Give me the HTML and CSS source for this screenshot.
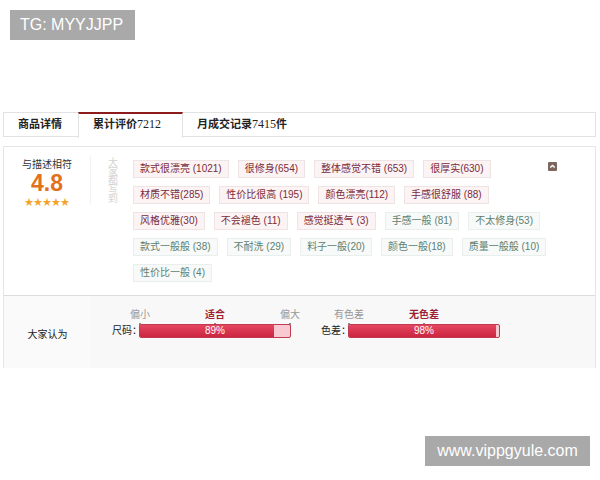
FILE: index.html
```html
<!DOCTYPE html>
<html lang="zh">
<head>
  <meta charset="UTF-8">
  <title>累计评价</title>
  <link rel="stylesheet" href="styles.css">
</head>
<body>
  <div class="mark mark-top">TG: MYYJJPP</div>

  <div class="tabs">
    <div class="tab">商品详情</div>
    <div class="tab active">累计评价<span class="num">7212</span></div>
    <div class="tab">月成交记录<span class="num">7415</span>件</div>
  </div>

  <div class="review">
    <div class="summary">
      <div class="score">
        <div class="score-title">与描述相符</div>
        <div class="score-value">4.8</div>
        <div class="stars">★★★★★</div>
      </div>
      <div class="side-label">大家都写到</div>
      <div class="tags">
        <div class="tag-row">
          <span class="tag">款式很漂亮 (1021)</span>
          <span class="tag">很修身(654)</span>
          <span class="tag">整体感觉不错 (653)</span>
          <span class="tag">很厚实(630)</span>
        </div>
        <div class="tag-row">
          <span class="tag">材质不错(285)</span>
          <span class="tag">性价比很高 (195)</span>
          <span class="tag">颜色漂亮(112)</span>
          <span class="tag">手感很舒服 (88)</span>
        </div>
        <div class="tag-row">
          <span class="tag">风格优雅(30)</span>
          <span class="tag">不会褪色 (11)</span>
          <span class="tag">感觉挺透气 (3)</span>
          <span class="tag neg">手感一般 (81)</span>
          <span class="tag neg">不太修身(53)</span>
        </div>
        <div class="tag-row">
          <span class="tag neg">款式一般般 (38)</span>
          <span class="tag neg">不耐洗 (29)</span>
          <span class="tag neg">料子一般(20)</span>
          <span class="tag neg">颜色一般(18)</span>
          <span class="tag neg">质量一般般 (10)</span>
        </div>
        <div class="tag-row">
          <span class="tag neg">性价比一般 (4)</span>
        </div>
      </div>
      <div class="toggle">
        <svg width="9" height="9" viewBox="0 0 9 9"><path d="M2.3 5.6 L4.5 3.4 L6.7 5.6" fill="none" stroke="#fff" stroke-width="1.4"/></svg>
      </div>
    </div>

    <div class="opinion">
      <div class="opinion-title">大家认为</div>
      <div class="meter">
        <span class="meter-name">尺码：</span>
        <div class="meter-body">
          <div class="meter-labels">
            <span>偏小</span>
            <span class="best">适合</span>
            <span>偏大</span>
          </div>
          <div class="bar">
            <div class="fill" style="width: 89%"></div>
            <span class="bar-text">89%</span>
          </div>
        </div>
      </div>
      <div class="meter">
        <span class="meter-name">色差：</span>
        <div class="meter-body">
          <div class="meter-labels">
            <span>有色差</span>
            <span class="best">无色差</span>
            <span class="blank"></span>
          </div>
          <div class="bar">
            <div class="fill" style="width: 98%"></div>
            <span class="bar-text">98%</span>
          </div>
        </div>
      </div>
    </div>
  </div>

  <div class="mark mark-bottom">www.vippgyule.com</div>
</body>
</html>
```

FILE: styles.css
```css
body {
  margin: 0;
  background: #fff;
  font-family: "Liberation Sans", "Noto Sans CJK SC", sans-serif;
  color: #333;
}

.mark {
  background: #a9a9a9;
  color: #fff;
  font-size: 16px;
  height: 30px;
  line-height: 30px;
}

.mark-top {
  margin: 10px 0 0 10px;
  width: 115px;
  padding-left: 10px;
}

.mark-bottom {
  margin: 68px 10px 0 auto;
  width: 165px;
  text-align: center;
}

/* tab strip */
.tabs {
  display: flex;
  margin: 72px 4px 0 3px;
  height: 23px;
  border: 1px solid #e2e2e2;
  background: #fff;
}

.tab {
  font-size: 11px;
  font-weight: bold;
  color: #222;
  line-height: 23px;
  padding: 0 16px 0 14px;
}

.tab:first-child {
  width: 44px;
}

.tab.active {
  border-top: 2px solid #8e1b1b;
  margin-top: -1px;
  border-left: 1px solid #e2e2e2;
  border-right: 1px solid #e2e2e2;
  padding: 0 16px 0 14px;
  line-height: 21px;
  width: 73px;
  background: #fff;
  height: 24px;
}

.tab .num {
  font-family: "Liberation Serif", serif;
  font-weight: normal;
  font-size: 12px;
}

/* review box */
.review {
  margin: 9px 4px 0 3px;
  border: 1px solid #e6e6e6;
  border-bottom: none;
}

.summary {
  display: flex;
  padding: 13px 0 13px;
}

.score {
  width: 86px;
  text-align: center;
  border-right: 1px solid #f2f2f2;
  height: 48px;
  margin-top: -4px;
}

.score-title {
  font-size: 10px;
  color: #333;
}

.score-value {
  font-size: 23px;
  font-weight: bold;
  color: #e2711d;
  line-height: 24px;
}

.stars {
  font-size: 9px;
  color: #f2a42a;
}

.side-label {
  writing-mode: vertical-rl;
  font-size: 10px;
  color: #d4d4d4;
  width: 42px;
  margin-top: -3px;
  display: flex;
  align-items: center;
  letter-spacing: -1px;
}

.tags {
  width: 412px;
  display: flex;
  flex-direction: column;
  gap: 8px;
}

.tag-row {
  display: flex;
  gap: 9px;
}

.tag {
  height: 16px;
  line-height: 16px;
  padding: 0 6px;
  font-size: 10px;
  color: #7a2b3c;
  background: #fcf4f4;
  border: 1px solid #f0e3e3;
  white-space: nowrap;
}

.tag.neg {
  color: #5d8170;
  background: #f7faf9;
  border-color: #e8efec;
}

.toggle {
  width: 9px;
  height: 9px;
  background: #7d675c;
  border-radius: 1px;
  margin: 2px 0 0 3px;
  display: flex;
}

/* opinion bars */
.opinion {
  display: flex;
  align-items: flex-start;
  height: 72px;
  border-top: 1px solid #dcdcdc;
  background: #f8f8f8;
}

.opinion-title {
  width: 87px;
  align-self: stretch;
  display: flex;
  align-items: center;
  justify-content: center;
  font-size: 10px;
  color: #222;
  background: #fafafa;
  padding-top: 2px;
}

.meter {
  display: flex;
  align-items: flex-end;
  margin: 10px 0 0 21px;
  white-space: nowrap;
}

.meter + .meter {
  margin-left: 30px;
}

.meter-name {
  font-size: 10px;
  color: #222;
  width: 27px;
  line-height: 14px;
}

.meter-body {
  width: 152px;
}

.meter-labels {
  display: flex;
  justify-content: space-between;
  margin: 0 -14px 3px -14px;
  font-size: 10px;
  color: #999;
}

.meter-labels span {
  width: 30px;
  text-align: center;
  position: relative;
}

.meter-labels span::after {
  content: "";
  position: absolute;
  left: 14px;
  bottom: -4px;
  width: 2px;
  height: 2px;
  background: #8a8a8a;
}

.meter-labels .blank::after {
  display: none;
}

.meter-labels .best {
  color: #9c1f33;
  font-weight: bold;
}

.bar {
  position: relative;
  height: 12px;
  border: 1px solid #c23a52;
  background: #f8c9d1;
  border-radius: 2px;
  overflow: hidden;
}

.fill {
  height: 100%;
  background: linear-gradient(#e4465f, #cc2441);
}

.bar-text {
  position: absolute;
  left: 0;
  right: 0;
  top: 0;
  text-align: center;
  font-size: 10px;
  line-height: 12px;
  color: #fff;
}
```
